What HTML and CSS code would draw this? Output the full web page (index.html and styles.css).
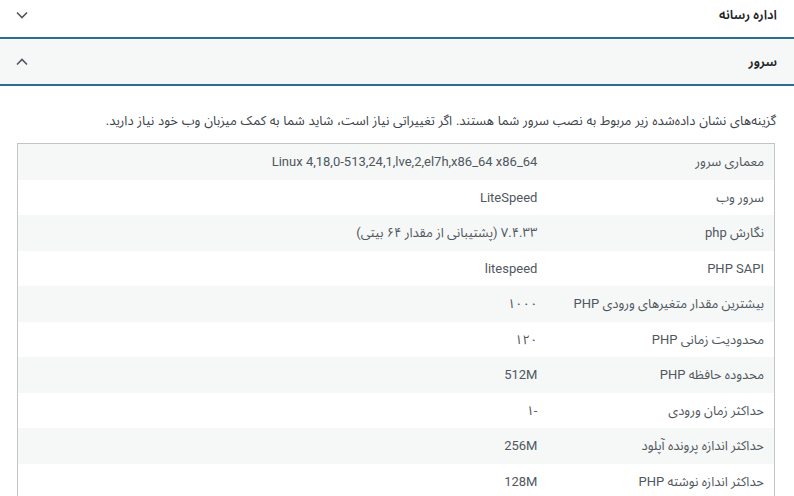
FILE: index.html
```html
<!DOCTYPE html>
<html lang="fa" dir="rtl">
<head>
<meta charset="utf-8">
<link rel="stylesheet" href="styles.css">
</head>
<body>
<div class="accordion">
  <div class="trigger trigger-closed">
    <span class="title">اداره رسانه</span>
    <svg class="chev" width="14" height="10" viewBox="0 0 14 10"><path d="M2 2.5 L7 7.5 L12 2.5" fill="none" stroke="#50575e" stroke-width="1.6"/></svg>
  </div>
  <div class="trigger trigger-open">
    <span class="title">سرور</span>
    <svg class="chev" width="14" height="10" viewBox="0 0 14 10"><path d="M2 7.5 L7 2.5 L12 7.5" fill="none" stroke="#50575e" stroke-width="1.6"/></svg>
  </div>
  <div class="panel">
    <p class="desc">گزینه‌های نشان داده‌شده زیر مربوط به نصب سرور شما هستند. اگر تغییراتی نیاز است، شاید شما به کمک میزبان وب خود نیاز دارید.</p>
    <table class="info">
      <tr><td>معماری سرور</td><td>Linux 4,18,0-513,24,1,lve,2,el7h,x86_64 x86_64</td></tr>
      <tr><td>سرور وب</td><td>LiteSpeed</td></tr>
      <tr><td>نگارش php</td><td>۷.۴.۳۳ (پشتیبانی از مقدار ۶۴ بیتی)</td></tr>
      <tr><td>PHP SAPI</td><td>litespeed</td></tr>
      <tr><td>بیشترین مقدار متغیرهای ورودی PHP</td><td>۱۰۰۰</td></tr>
      <tr><td>محدودیت زمانی PHP</td><td>۱۲۰</td></tr>
      <tr><td>محدوده حافظه PHP</td><td>512M</td></tr>
      <tr><td>حداکثر زمان ورودی</td><td>-۱</td></tr>
      <tr><td>حداکثر اندازه پرونده آپلود</td><td>256M</td></tr>
      <tr><td>حداکثر اندازه نوشته PHP</td><td>128M</td></tr>
    </table>
  </div>
</div>
</body>
</html>
```
FILE: styles.css
```css
html, body {
  margin: 0;
  padding: 0;
  background: #ffffff;
}
body {
  direction: rtl;
  font-family: Roboto, "Noto Sans Arabic", "DejaVu Sans", sans-serif;
  font-size: 13px;
  color: #50575e;
}
.trigger {
  display: flex;
  align-items: center;
  justify-content: space-between;
  padding: 0 17px 0 15px;
  border-bottom: 2px solid #2c6e8e;
  color: #1d2327;
}
.trigger-closed {
  height: 37px;
  background: #ffffff;
}
.trigger-closed .title {
  margin-top: -7px;
}
.trigger-closed .chev {
  margin-top: -8px;
}
.trigger-open {
  height: 45px;
  background: #f6f7f7;
}
.title {
  font-weight: 600;
  font-size: 13px;
}
.chev {
  display: block;
}
.panel {
  padding: 0 19px 0 17px;
}
.desc {
  margin: 25px -1px 0 0;
  line-height: 20px;
  word-spacing: 0.5px;
  color: #3c434a;
}
.info {
  margin-top: 12px;
  width: 100%;
  border: 1px solid #c3c4c7;
  border-collapse: collapse;
}
.info td {
  padding: 8px 10px;
  line-height: 19.5px;
  text-align: right;
  vertical-align: middle;
}
.info td:first-child {
  width: 30%;
}
.info tr:nth-child(odd) {
  background: #f6f7f7;
}
```
